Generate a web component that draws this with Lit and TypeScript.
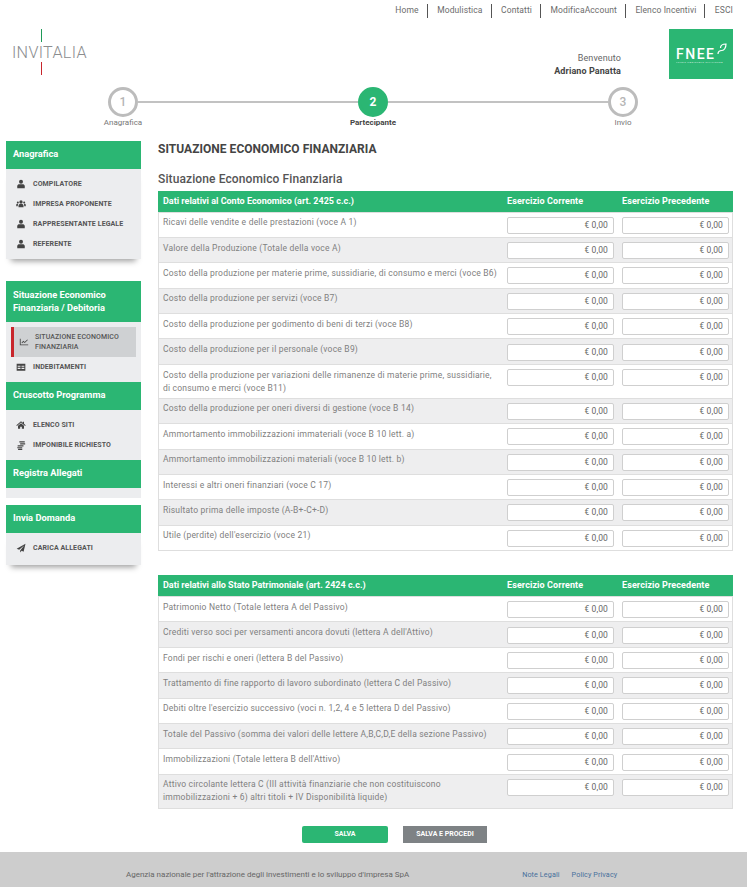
import { LitElement, html, css, svg } from "lit";
import { customElement } from "lit/decorators.js";

const icons: Record<string, any> = {
  user: svg`<circle cx="6" cy="3.2" r="2.4"/><path d="M1.5 11V8.6C1.5 7 2.8 6.3 4 6.3h4c1.2 0 2.5.7 2.5 2.3V11z"/>`,
  users: svg`<circle cx="6" cy="3.6" r="2"/><circle cx="2.2" cy="4.2" r="1.2"/><circle cx="9.8" cy="4.2" r="1.2"/><path d="M3 10V8c0-1.2 1-1.9 2-1.9h2c1 0 2 .7 2 1.9v2zM.3 8.6V7c0-.8.6-1.2 1.3-1.2h.9L2 8.6zM11.7 8.6V7c0-.8-.6-1.2-1.3-1.2h-.9l.5 2.8z"/>`,
  chart: svg`<path d="M1 2v8h10v-1H2V2z"/><path d="M3 7l2.2-2.4 1.6 1.3L10 3l.6.7-3.7 3.5-1.6-1.3L3.7 7.6z"/>`,
  table: svg`<path fill-rule="evenodd" d="M.8 2h10.4v8.4H.8zM2 4.4v1.4h3.4V4.4zm4.6 0v1.4H10V4.4zM2 7v1.4h3.4V7zm4.6 0v1.4H10V7z"/>`,
  home: svg`<path d="M6 1.5L.4 6.4l.7.8L6 3l4.9 4.2.7-.8L9.6 4.6V2H8.2v1.4z"/><path d="M2.4 7L6 4l3.6 3v3.5H7V8H5v2.5H2.4z"/>`,
  coins: svg`<path d="M4 1.5h6.5v1.6H4zM5 3.8h6v1.7H5zM2 6.2h7v1.6H2zM1.5 8.6h6V10h-6zM2.5 10.6h5V12h-5z"/>`,
  send: svg`<path d="M11.4.8L.8 7l3 1.2L10 2.6 5 9v2.4l1.8-2 2.3 1z"/>`,
};

type Item = { icon: string; label: string; active?: boolean };
type Panel = { title: string; items: Item[]; shadow: boolean; gap?: boolean };

const panels: Panel[] = [
  {
    title: "Anagrafica",
    shadow: true,
    gap: true,
    items: [
      { icon: "user", label: "COMPILATORE" },
      { icon: "users", label: "IMPRESA PROPONENTE" },
      { icon: "user", label: "RAPPRESENTANTE LEGALE" },
      { icon: "user", label: "REFERENTE" },
    ],
  },
  {
    title: "Situazione Economico Finanziaria / Debitoria",
    shadow: false,
    items: [
      { icon: "chart", label: "SITUAZIONE ECONOMICO FINANZIARIA", active: true },
      { icon: "table", label: "INDEBITAMENTI" },
    ],
  },
  {
    title: "Cruscotto Programma",
    shadow: false,
    items: [
      { icon: "home", label: "ELENCO SITI" },
      { icon: "coins", label: "IMPONIBILE RICHIESTO" },
    ],
  },
  { title: "Registra Allegati", shadow: true, items: [] },
  { title: "Invia Domanda", shadow: true, items: [{ icon: "send", label: "CARICA ALLEGATI" }] },
];

const economico = [
  "Ricavi delle vendite e delle prestazioni (voce A 1)",
  "Valore della Produzione (Totale della voce A)",
  "Costo della produzione per materie prime, sussidiarie, di consumo e merci (voce B6)",
  "Costo della produzione per servizi (voce B7)",
  "Costo della produzione per godimento di beni di terzi (voce B8)",
  "Costo della produzione per il personale (voce B9)",
  "Costo della produzione per variazioni delle rimanenze di materie prime, sussidiarie, di consumo e merci (voce B11)",
  "Costo della produzione per oneri diversi di gestione (voce B 14)",
  "Ammortamento immobilizzazioni immateriali (voce B 10 lett. a)",
  "Ammortamento immobilizzazioni materiali (voce B 10 lett. b)",
  "Interessi e altri oneri finanziari (voce C 17)",
  "Risultato prima delle imposte (A-B+-C+-D)",
  "Utile (perdite) dell'esercizio (voce 21)",
];

const patrimoniale = [
  "Patrimonio Netto (Totale lettera A del Passivo)",
  "Crediti verso soci per versamenti ancora dovuti (lettera A dell'Attivo)",
  "Fondi per rischi e oneri (lettera B del Passivo)",
  "Trattamento di fine rapporto di lavoro subordinato (lettera C del Passivo)",
  "Debiti oltre l'esercizio successivo (voci n. 1,2, 4 e 5 lettera D del Passivo)",
  "Totale del Passivo (somma dei valori delle lettere A,B,C,D,E della sezione Passivo)",
  "Immobilizzazioni (Totale lettera B dell'Attivo)",
  "Attivo circolante lettera C (III attività finanziarie che non costituiscono immobilizzazioni + 6) altri titoli + IV Disponibilità liquide)",
];

@customElement("app-root")
export class AppRoot extends LitElement {
  static styles = css`
    :host {
      display: block;
      width: 747px;
      height: 887px;
      overflow: hidden;
      background: #fff;
      font-family: "Roboto", "Liberation Sans", sans-serif;
      color: #777;
    }
    * { box-sizing: border-box; }

    .topnav {
      display: flex;
      justify-content: flex-end;
      padding: 4px 14px 0 0;
      height: 29px;
      font-size: 8.5px;
      letter-spacing: 0.11px;
      color: #6c6c6c;
    }
    .topnav span {
      height: 14px;
      line-height: 13px;
      padding: 0 8px 0 9.5px;
      border-right: 1px solid #555;
    }
    .topnav span:last-child { border-right: 0; padding-right: 0; }

    .brand {
      display: flex;
      height: 50px;
      padding: 0 14px 0 12px;
      align-items: flex-start;
    }
    .logo {
      width: 78px;
      height: 46px;
      display: flex;
      flex-direction: column;
      align-items: flex-start;
      flex: none;
    }
    .logo i { display: block; width: 1px; height: 13px; margin-left: 29px; }
    .logo i.g { background: #1f9a58; }
    .logo i.r { background: #c8262c; }
    .logo b {
      font-weight: 300;
      font-size: 16.2px;
      line-height: 19px;
      padding-top: 1px;
      letter-spacing: 0.3px;
      color: #8b8d8f;
    }
    .welcome {
      margin-left: auto;
      margin-right: 48px;
      padding-top: 23px;
      text-align: right;
      font-size: 9px;
      line-height: 13px;
      letter-spacing: 0.1px;
      color: #666;
    }
    .welcome b { display: block; color: #444; font-weight: 700; }
    .fnee {
      width: 64px;
      height: 50px;
      background: #2bb673;
      color: #fff;
      position: relative;
      display: flex;
      flex-direction: column;
      align-items: flex-start;
      padding: 19px 0 0 7px;
      flex: none;
    }
    .fnee b { font-size: 14px; line-height: 13px; font-weight: 500; letter-spacing: 1.5px; }
    .fnee small { font-size: 2.5px; line-height: 4px; letter-spacing: 0.4px; opacity: .7; white-space: nowrap; }
    .fnee svg { position: absolute; left: 48px; top: 14px; }

    .steps {
      display: grid;
      grid-template-columns: 30px 220px 30px 220px 30px;
      align-items: center;
      margin: 8px 0 0 108px;
      width: 530px;
    }
    .circle {
      width: 30px;
      height: 30px;
      border-radius: 50%;
      border: 3px solid #bcbcbc;
      display: flex;
      align-items: center;
      justify-content: center;
      font-size: 12px;
      font-weight: 500;
      color: #b5b5b5;
      background: #fff;
    }
    .circle.on { background: #2bb673; border-color: #2bb673; color: #fff; font-weight: 700; }
    .line { height: 2px; background: #c2c2c2; }
    .slabel {
      justify-self: center;
      white-space: nowrap;
      font-size: 8px;
      line-height: 10px;
      margin-top: 1px;
      color: #777;
    }
    .slabel.on { color: #444; font-weight: 700; }
    .s1 { grid-column: 1; }
    .s2 { grid-column: 3; }
    .s3 { grid-column: 5; }

    .content {
      display: flex;
      align-items: flex-start;
      padding: 13px 14px 0 6px;
      gap: 17px;
      height: 724px;
    }
    .side { width: 135px; flex: none; }

    .phead {
      background: #2bb673;
      color: #fff;
      font-size: 9.3px;
      font-weight: 700;
      line-height: 13px;
      padding: 6px 7px 0;
      height: 28px;
    }
    .phead.two { height: 41px; padding-top: 7px; }
    .pbody {
      background: #ecedef;
      padding: 5px 0;
      min-height: 10px;
    }
    .panel { position: relative; margin-bottom: 7px; }
    .panel.tight { margin-bottom: 0; }
    .panel.gap { margin-bottom: 22px; }
    .panel.shadowed .pbody { box-shadow: 0 7px 6px -5px rgba(0, 0, 0, 0.4); }
    .pbody.empty { padding: 0; }
    .pbody.single { padding: 5px 0 7px; }

    .item {
      display: flex;
      align-items: center;
      height: 20px;
      padding-left: 10px;
      font-size: 7px;
      font-weight: 700;
      letter-spacing: 0.1px;
      color: #555;
    }
    .item svg { width: 10px; height: 10px; fill: #444; flex: none; margin-right: 7px; }
    .item.active {
      height: 30px;
      margin: 0 5px;
      padding-left: 5px;
      background: #cfd1d3;
      border-left: 3px solid #c8262c;
      line-height: 10px;
      font-weight: 500;
    }
    .item.active svg { margin-right: 6px; }

    main { width: 575px; flex: none; }
    h1 {
      margin: 0;
      font-size: 12px;
      line-height: 16px;
      font-weight: 700;
      color: #444;
      letter-spacing: 0.03px;
    }
    h2 {
      margin: 14px 0 3.5px;
      font-size: 12px;
      line-height: 16px;
      font-weight: 500;
      color: #555;
      letter-spacing: 0.11px;
    }

    .table { border: 1px solid #dedede; border-top: 0; }
    .table + .table { margin-top: 24px; }
    .row {
      display: grid;
      grid-template-columns: 1fr 115px 107px;
      padding: 4.2px 3px 3.2px 0;
      border-top: 1px solid #dedede;
      min-height: 25.4px;
    }
    .row:nth-child(even) { background: #eeeeef; }
    .row .lab {
      padding: 0 8px 0 4px;
      margin-top: -0.5px;
      font-size: 8.5px;
      line-height: 13px;
      letter-spacing: 0.21px;
      color: #808080;
    }
    .thead {
      display: grid;
      grid-template-columns: 1fr 115px 107px;
      margin: 0 -1px;
      padding-right: 4px;
      height: 21px;
      background: #2bb673;
      color: #fff;
      font-size: 9px;
      font-weight: 700;
      line-height: 20px;
      letter-spacing: 0.1px;
    }
    .thead span { white-space: nowrap; }
    .thead span:first-child { padding-left: 5px; letter-spacing: 0; }
    .val {
      width: 107px;
      height: 17px;
      background: #fff;
      border: 1px solid #cfcfcf;
      border-radius: 2px;
      text-align: right;
      padding-right: 5px;
      font-size: 8.5px;
      line-height: 15px;
      letter-spacing: 0.1px;
      color: #666;
    }

    .actions { display: flex; gap: 15px; margin: 17px 0 0 144px; }
    .btn {
      height: 17px;
      width: 86px;
      background: #2bb673;
      color: #fff;
      border: 0;
      border-radius: 2px;
      text-align: center;
      font-family: inherit;
      font-size: 7px;
      font-weight: 700;
      line-height: 17px;
      padding: 0;
    }
    .btn.grey { background: #7e8285; width: 84px; border-radius: 0; }

    footer {
      height: 35px;
      background: #cdcdcd;
      display: flex;
      align-items: flex-start;
      padding: 17px 0 0 126px;
      font-size: 8px;
      line-height: 12px;
      color: #666;
    }
    footer .links {
      margin-left: 113px;
      display: flex;
      gap: 12px;
      color: #47709c;
      font-size: 7.2px;
      letter-spacing: 0.1px;
    }
  `;

  private panel(p: Panel, i: number) {
    const cls = ["panel", p.shadow ? "shadowed" : "tight", p.gap ? "gap" : ""].join(" ");
    const bodyCls = p.items.length === 0 ? "empty" : p.items.length === 1 ? "single" : "";
    return html`<section class=${cls}>
      <div class="phead ${i === 1 ? "two" : ""}">${p.title}</div>
      <div class="pbody ${bodyCls}">
        ${p.items.map(
          (it) => html`<div class="item ${it.active ? "active" : ""}">
            <svg viewBox="0 0 12 12">${icons[it.icon]}</svg><span>${it.label}</span>
          </div>`
        )}
      </div>
    </section>`;
  }

  private table(title: string, rows: string[]) {
    return html`<div class="table">
      <div class="thead"><span>${title}</span><span>Esercizio Corrente</span><span>Esercizio Precedente</span></div>
      <div>
        ${rows.map(
          (r) => html`<div class="row">
            <div class="lab">${r}</div>
            <div class="val">€ 0,00</div>
            <div class="val">€ 0,00</div>
          </div>`
        )}
      </div>
    </div>`;
  }

  render() {
    return html`
      <header>
        <nav class="topnav">
          ${["Home", "Modulistica", "Contatti", "ModificaAccount", "Elenco Incentivi", "ESCI"].map(
            (n) => html`<span>${n}</span>`
          )}
        </nav>
        <div class="brand">
          <div class="logo"><i class="g"></i><b>INVITALIA</b><i class="r"></i></div>
          <div class="welcome">Benvenuto<b>Adriano Panatta</b></div>
          <div class="fnee">
            <svg width="11" height="12" viewBox="0 0 11 12" fill="none" stroke="#fff" stroke-width="1.2">
              <path d="M1 11C1 8 3 7.5 5 7.5S9 5 9 1C6 1 3.5 2 3.5 5" />
            </svg>
            <b>FNEE</b><small>FONDO NAZIONALE EFFICIENZA</small>
          </div>
        </div>
        <div class="steps">
          <div class="circle">1</div><div class="line"></div>
          <div class="circle on">2</div><div class="line"></div>
          <div class="circle">3</div>
          <div class="slabel s1">Anagrafica</div>
          <div class="slabel s2 on">Partecipante</div>
          <div class="slabel s3">Invio</div>
        </div>
      </header>
      <div class="content">
        <aside class="side">${panels.map((p, i) => this.panel(p, i))}</aside>
        <main>
          <h1>SITUAZIONE ECONOMICO FINANZIARIA</h1>
          <h2>Situazione Economico Finanziaria</h2>
          ${this.table("Dati relativi al Conto Economico (art. 2425 c.c.)", economico)}
          ${this.table("Dati relativi allo Stato Patrimoniale (art. 2424 c.c.)", patrimoniale)}
          <div class="actions">
            <button class="btn">SALVA</button>
            <button class="btn grey">SALVA E PROCEDI</button>
          </div>
        </main>
      </div>
      <footer>
        <span>Agenzia nazionale per l'attrazione degli investimenti e lo sviluppo d'impresa SpA</span>
        <div class="links"><span>Note Legali</span><span>Policy Privacy</span></div>
      </footer>
    `;
  }
}
